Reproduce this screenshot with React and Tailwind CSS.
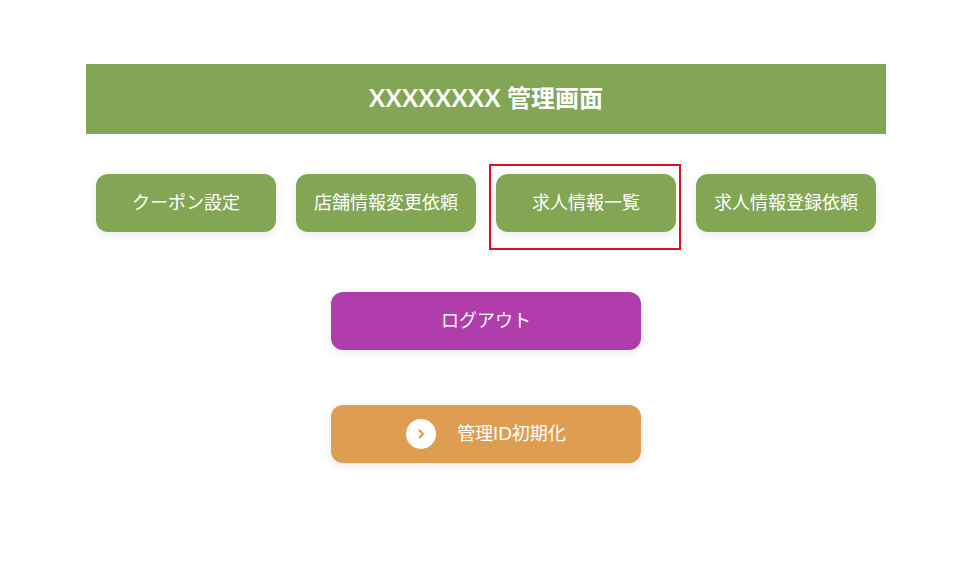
const MENU_ITEMS = [
  { label: "クーポン設定" },
  { label: "店舗情報変更依頼" },
  { label: "求人情報一覧", marked: true },
  { label: "求人情報登録依頼" },
];

const FONT = "font-['Lato','Noto_Sans_CJK_JP',sans-serif]";

const App = () => {
  return (
    <div className={`min-h-[577px] bg-white pt-16 text-white ${FONT}`}>
      <div className="ml-[86px] w-[800px]">
        {/* Header */}
        <h1 className="flex h-[70px] items-center justify-center bg-[#83a655] pb-[2px] text-2xl font-bold">
          <span className="tracking-[0.4px]">XXXXXXXX</span>&nbsp;管理画面
        </h1>

        {/* Menu */}
        <div className="mt-10 flex justify-between px-2.5">
          {MENU_ITEMS.map((item) => (
            <div key={item.label} className="relative">
              <a className="flex h-[58px] w-[180px] items-center justify-center rounded-xl bg-[#83a655] pb-[2px] text-lg shadow-[0_2px_10px_rgba(0,0,0,0.1)]">
                {item.label}
              </a>
              {item.marked && (
                <div className="absolute top-[-10px] left-[-7px] h-[86px] w-[192px] border-2 border-[#e0101c]"></div>
              )}
            </div>
          ))}
        </div>

        {/* Logout */}
        <a className="mx-auto mt-[60px] flex h-[58px] w-[310px] items-center justify-center rounded-xl bg-[#b03dab] pb-[2px] text-lg shadow-[0_2px_10px_rgba(0,0,0,0.1)]">
          ログアウト
        </a>

        {/* Reset */}
        <a className="mx-auto mt-[55px] flex h-[58px] w-[310px] items-center justify-center gap-[21px] rounded-xl bg-[#de9d50] text-lg shadow-[0_2px_10px_rgba(0,0,0,0.1)]">
          <span className="flex h-[30px] w-[30px] items-center justify-center rounded-full bg-white">
            <svg width="10" height="12" viewBox="0 0 10 12" fill="none">
              <path d="M3 2l4 4-4 4" stroke="#de9d50" strokeWidth="2.2" />
            </svg>
          </span>
          <span className="pb-[2px]">管理ID初期化</span>
        </a>
      </div>
    </div>
  );
};

export default App;
